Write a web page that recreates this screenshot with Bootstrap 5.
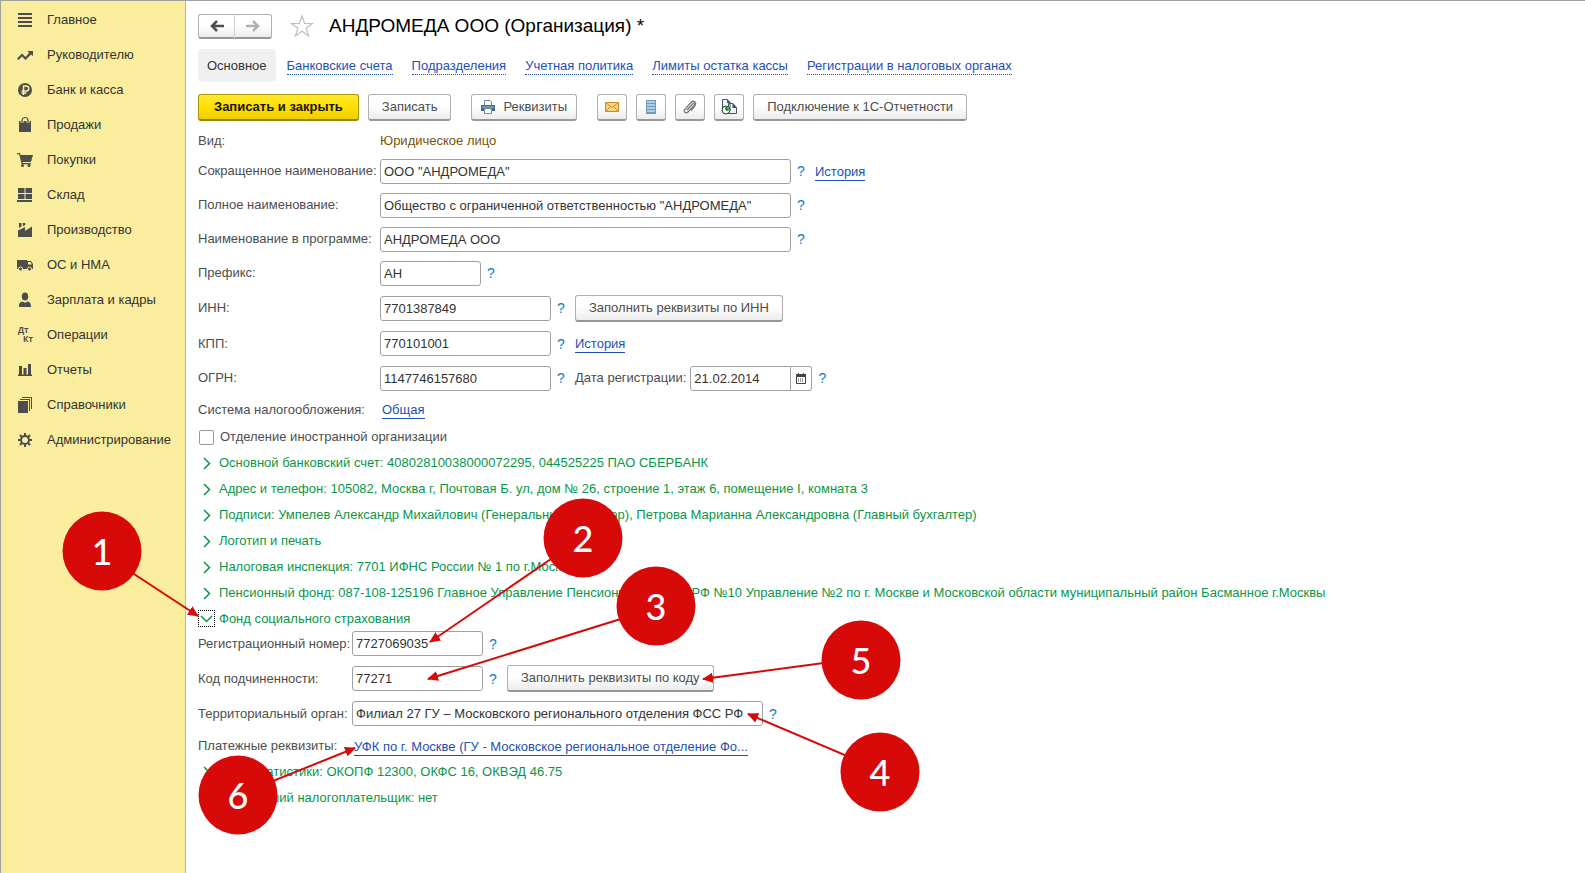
<!DOCTYPE html>
<html lang="ru">
<head>
<meta charset="utf-8">
<meta name="viewport" content="width=device-width, initial-scale=1">
<title>АНДРОМЕДА ООО (Организация)</title>
<link href="https://cdn.jsdelivr.net/npm/bootstrap@5.3.0/dist/css/bootstrap.min.css" rel="stylesheet">
<style>
  body { font: 13px/20px "Liberation Sans", Arial, sans-serif; color: #4d4d4d; background: #fff; }
  .app { border-top: 1px solid #a0a0a0; border-left: 1px solid #a0a0a0; }
  .sections { width: 185px; background: #fbed9e; border-right: 1px solid #c9ba7a; padding-top: 1px; }
  .sections .nav-link { height: 35px; padding: 0 0 0 16px; gap: 14px; color: #333; }
  .sections svg { width: 16px; height: 16px; fill: #4d4d4d; flex: none; overflow: visible; }
  .workspace { padding: 12px 12px 24px; min-width: 0; }
  .titlebar { height: 26px; }
  h1 { font-size: 19px; line-height: 26px; color: #000; margin: 0 0 0 15px; }
  .star { margin-left: 18px; padding: 0; border: 0; background: none; line-height: 0; }
  .tool { height: 27px; padding: 0 13px; color: #4d4d4d; background: linear-gradient(#fff 45%, #ececec); border: 1px solid #b0b0b0; border-bottom: 2px solid #979797; border-radius: 3px; font-size: 13px; line-height: 20px; white-space: nowrap; display: inline-flex; align-items: center; justify-content: center; }
  .tool-main { padding: 0 15px; background: linear-gradient(#ffe92f, #ffe000 50%, #f0cf00); border-color: #a89500; border-bottom-color: #978500; color: #1a1400; font-weight: 700; }
  .tool-print { padding: 0 9px; }
  .tool-icon { width: 30px; padding: 0; }
  .group-start { margin-left: 11px; }
  .arrows .tool { width: 37px; padding: 0; height: 25px; }
  .arrows .tool:first-child { border-radius: 3px 0 0 3px; border-right-color: #d0d0d0; }
  .arrows .tool:last-child { border-radius: 0 3px 3px 0; border-left: 0; }
  .pages { margin-top: 9px; gap: 19px; height: 34px; align-items: center; }
  .pages .nav-link { padding: 2px 0 0; line-height: 16px; color: #1d50b4; border-bottom: 1px dotted #1d50b4; }
  .pages .nav-link.active { color: #333; background: #f0f0f0; border: 0; border-radius: 4px; padding: 9px 9px 8px; margin-right: -8px; }
  .commands { margin-top: 12px; gap: 9px; }
  .form-main { margin-top: 7px; }
  .form-line { min-height: 34px; }
  .line-36 { min-height: 36px; }
  .line-35 { min-height: 35px; }
  .line-29 { min-height: 29px; }
  .line-26 { min-height: 26px; }
  .caption { width: 182px; flex: none; white-space: nowrap; }
  .caption + .lnk { margin-left: 2px; }
  .fund .caption { width: 154px; }
  .fund { gap: 10px; margin-bottom: 3px; }
  .fund-line { height: 25px; }
  .field { height: 25px; padding: 0 3px; border: 1px solid #a0a0a0; border-radius: 3px; color: #333; font-size: 13px; line-height: 20px; flex: none; background: #fff; }
  .w-long { width: 411px; } .w-mid { width: 171px; } .w-code { width: 131px; } .w-short { width: 101px; }
  .date { width: 101px; border-radius: 3px 0 0 3px; }
  .date-btn { width: 21px; height: 25px; padding: 0; border: 1px solid #a0a0a0; border-left: 0; border-radius: 0 3px 3px 0; background: #fff; line-height: 0; }
  .hint { width: 20px; margin-right: 4px; padding: 0; border: 0; background: none; color: #0c7cc4; flex: none; font-size: 14px; line-height: 20px; text-align: center; }
  .lnk { color: #1d50b4; line-height: 16px; padding-top: 2px; text-decoration: none; border-bottom: 1px solid #1d50b4; white-space: nowrap; }
  .kind { color: #7a5300; }
  .fold { height: 26px; border: 0; padding: 0; background: none; color: #0a9648; gap: 4px; text-align: left; white-space: nowrap; }
  .fold svg { width: 17px; height: 17px; fill: none; stroke: #0a9648; stroke-width: 1.5; flex: none; }
  .fold.open { height: 25px; }
  .fold.open svg { outline: 1px dotted #000; outline-offset: -1px; }
  .tick { width: 15px; height: 15px; margin: 0 6px 0 1px; border: 1px solid #999; }
  .tick.form-check-input { border-radius: 2px; }
  .callouts { left: 0; top: 0; width: 930px; height: 850px; pointer-events: none; }
  .callouts circle { fill: #d70909; }
  .callouts line { stroke: #d70909; stroke-width: 2; }
  .callouts text { fill: #fff; font: 500 36px Lato, "Open Sans", sans-serif; text-anchor: middle; }
</style>
</head>
<body>
<div class="app d-flex min-vh-100 position-relative">
  <nav class="sections nav flex-column flex-nowrap flex-shrink-0">
    <a class="nav-link d-flex align-items-center" href="#"><svg viewBox="0 0 16 16"><path d="M1 1h14v2H1zM1 5h14v2H1zM1 9h14v2H1zM1 13h14v2H1z"/></svg>Главное</a>
    <a class="nav-link d-flex align-items-center" href="#"><svg viewBox="0 0 16 16"><path d="M0 11.500 5 6.500 8.500 10 12 6 10.500 4H16v5l-2-1.500L8.500 13 5 9.500 1.500 13z"/></svg>Руководителю</a>
    <a class="nav-link d-flex align-items-center" href="#"><svg viewBox="0 0 16 16"><circle cx="8" cy="8" r="7"/><path d="M6.500 13V4h2.700a2.500 2.500 0 0 1 0 5H4.500M4.500 11h5" fill="none" stroke="#fbed9e" stroke-width="1.500"/></svg>Банк и касса</a>
    <a class="nav-link d-flex align-items-center" href="#"><svg viewBox="0 0 16 16"><path d="M2 4h12v11H2z"/><path d="M5 6V3.500a3 3 0 0 1 6 0V6" fill="none" stroke="#fbed9e" stroke-width="3"/><path d="M5 6V3.500a3 3 0 0 1 6 0V6" fill="none" stroke="#4d4d4d" stroke-width="1.200"/></svg>Продажи</a>
    <a class="nav-link d-flex align-items-center" href="#"><svg viewBox="0 0 16 16"><path d="M0 1h3l.6 2H16l-2 7H5.500l.3 1H14v1.200H4.700L2.200 2.200H0z"/><circle cx="5.500" cy="13.500" r="1.500"/><circle cx="12" cy="13.500" r="1.500"/></svg>Покупки</a>
    <a class="nav-link d-flex align-items-center" href="#"><svg viewBox="0 0 16 16"><path d="M1 1h6.500v5H1zM8.500 1H15v5H8.500zM1 7h6.500v5H1zM8.500 7H15v5H8.500zM0 13h15v2H0z"/></svg>Склад</a>
    <a class="nav-link d-flex align-items-center" href="#"><svg viewBox="0 0 16 16"><path d="M1 8.500 8 5v4l7-4.500V15H1zM2 1h2.500v3.500L2 6zM5.800 1H8.300v2L5.800 4.300z"/></svg>Производство</a>
    <a class="nav-link d-flex align-items-center" href="#"><svg viewBox="0 0 16 16"><path fill-rule="evenodd" d="M0 3h10v1h4l2 3v5H0zM11 5v2.500h4L13.500 5z"/><g stroke="#fbed9e"><circle cx="3.500" cy="12" r="2"/><circle cx="12.500" cy="12" r="2"/></g></svg>ОС и НМА</a>
    <a class="nav-link d-flex align-items-center" href="#"><svg viewBox="0 0 16 16"><ellipse cx="8" cy="4.500" rx="3.200" ry="4"/><path d="M2 15c0-4 1-5 3.500-5.500C7 11 9 11 10.500 9.500 13 10 14 11 14 15z"/></svg>Зарплата и кадры</a>
    <a class="nav-link d-flex align-items-center" href="#"><svg viewBox="0 0 16 16" font-family="Open Sans, sans-serif" font-weight="700" font-size="8"><text x="1" y="6">Дт</text><text x="6" y="15">Кт</text></svg>Операции</a>
    <a class="nav-link d-flex align-items-center" href="#"><svg viewBox="0 0 16 16"><path d="M2 4h3v8.500H2zM6.500 6h3v6.500h-3zM11 2h3v10.500h-3zM1 12.500h14V14H1z"/></svg>Отчеты</a>
    <a class="nav-link d-flex align-items-center" href="#"><svg viewBox="0 0 16 16"><path d="M1 4h10v12H1zM3 2h10v12h-1V3H3zM5 0h10v12h-1V1H5z"/></svg>Справочники</a>
    <a class="nav-link d-flex align-items-center" href="#"><svg viewBox="0 0 16 16"><g fill="none" stroke="#4d4d4d"><circle cx="8" cy="8" r="4" stroke-width="2"/><path stroke-width="2" d="M8 1v2.500M8 12.500V15M1 8h2.500M12.500 8H15M3 3l2 2M11 11l2 2M13 3l-2 2M5 11l-2 2"/></g></svg>Администрирование</a>
  </nav>

  <main class="workspace flex-grow-1">
    <header class="titlebar d-flex align-items-center">
      <div class="arrows d-flex">
        <button class="tool" type="button" aria-label="Назад"><svg width="14" height="12" viewBox="0 0 14 12"><path d="M14 6H3M7 1 2 6l5 5" fill="none" stroke="#4d4d4d" stroke-width="2.500"/></svg></button>
        <button class="tool" type="button" aria-label="Вперед"><svg width="14" height="12" viewBox="0 0 14 12"><path d="M0 6h11M7 1l5 5-5 5" fill="none" stroke="#b0b0b0" stroke-width="2.500"/></svg></button>
      </div>
      <button class="star" type="button" aria-label="В избранное"><svg width="24" height="24" viewBox="0 0 24 24"><path d="m12 2 2.600 7.500H22.500l-6.400 4.700 2.500 7.800-6.600-4.800L5.400 22l2.500-7.800L1.500 9.500h7.900z" fill="none" stroke="#b9bfc5" stroke-width="1.200"/></svg></button>
      <h1 class="fw-normal text-nowrap">АНДРОМЕДА ООО (Организация) *</h1>
    </header>

    <nav class="pages nav flex-nowrap text-nowrap">
      <a class="nav-link active" href="#">Основное</a>
      <a class="nav-link" href="#">Банковские счета</a>
      <a class="nav-link" href="#">Подразделения</a>
      <a class="nav-link" href="#">Учетная политика</a>
      <a class="nav-link" href="#">Лимиты остатка кассы</a>
      <a class="nav-link" href="#">Регистрации в налоговых органах</a>
    </nav>

    <div class="commands d-flex">
      <button class="tool tool-main" type="button">Записать и закрыть</button>
      <button class="tool" type="button">Записать</button>
      <button class="tool tool-print group-start" type="button"><svg class="me-2" width="14" height="14" viewBox="0 0 14 14"><path d="M3.500 5V.5H9L10.500 2v3" fill="#fff" stroke="#6b87a3"/><path d="M0 5h14v6H0z" fill="#41688f"/><path d="M1 7h12" stroke="#a9c0d6"/><path d="M3.500 8.500h7v5h-7z" fill="#fff" stroke="#6b87a3"/></svg>Реквизиты</button>
      <button class="tool tool-icon group-start" type="button" aria-label="Письмо"><svg width="14" height="10" viewBox="0 0 14 10"><path d="M.5.5h13v9H.5z" fill="#fbd77c" stroke="#c98a2b"/><path d="m1 1 6 4.500L13 1M1 9l4-4M13 9 9 5" fill="none" stroke="#c98a2b"/></svg></button>
      <button class="tool tool-icon" type="button" aria-label="Список"><svg width="10" height="14" viewBox="0 0 10 14"><path d="M0 0h10v14H0z" fill="#6d9ab8"/><path d="M1 2h8M1 5h8M1 8h8M1 11h8" stroke="#c5e0ee" stroke-width="1.500"/></svg></button>
      <button class="tool tool-icon" type="button" aria-label="Файлы"><svg width="14" height="14" viewBox="0 0 14 14"><path d="m4 10 5.500-6c1.200-1.300 2.700.1 1.600 1.400L5 12c-2 2-5 0-3.200-2.700L8 2.500c2.500-2.700 6 0 4 3L8 10.500" fill="none" stroke="#777" stroke-width="1.300"/></svg></button>
      <button class="tool tool-icon" type="button" aria-label="История документов"><svg width="16" height="16" viewBox="0 0 16 16"><path d="M1.500.5H6L9 3.500V12H1.500zM7.500 4.500H12l3.500 4v6h-8z" fill="#eef3f7" stroke="#44546a"/><path d="M6 0v4h4zM11.500 4v5H16z" fill="#44546a"/><circle cx="5" cy="11" r="4" fill="#eaffea" stroke="#333"/><path d="M5 11V7.500A3.500 3.500 0 0 1 8.500 11z" fill="#38c43c"/><path d="M5 8v3h2.500" stroke="#222" fill="none"/></svg></button>
      <button class="tool" type="button">Подключение к 1С-Отчетности</button>
    </div>

    <form class="form-main">
      <div class="form-line line-26 d-flex align-items-center"><span class="caption">Вид:</span><span class="kind">Юридическое лицо</span></div>
      <div class="form-line d-flex align-items-center"><label class="caption" for="f1">Сокращенное наименование:</label><input id="f1" class="field w-long" value='ООО "АНДРОМЕДА"'><button class="hint" type="button">?</button><a class="lnk" href="#">История</a></div>
      <div class="form-line d-flex align-items-center"><label class="caption" for="f2">Полное наименование:</label><input id="f2" class="field w-long" value='Общество с ограниченной ответственностью "АНДРОМЕДА"'><button class="hint" type="button">?</button></div>
      <div class="form-line d-flex align-items-center"><label class="caption" for="f3">Наименование в программе:</label><input id="f3" class="field w-long" value="АНДРОМЕДА ООО"><button class="hint" type="button">?</button></div>
      <div class="form-line d-flex align-items-center"><label class="caption" for="f4">Префикс:</label><input id="f4" class="field w-short" value="АН"><button class="hint" type="button">?</button></div>
      <div class="form-line line-36 d-flex align-items-center"><label class="caption" for="f5">ИНН:</label><input id="f5" class="field w-mid" value="7701387849"><button class="hint" type="button">?</button><button class="tool" type="button">Заполнить реквизиты по ИНН</button></div>
      <div class="form-line line-35 d-flex align-items-center"><label class="caption" for="f6">КПП:</label><input id="f6" class="field w-mid" value="770101001"><button class="hint" type="button">?</button><a class="lnk" href="#">История</a></div>
      <div class="form-line d-flex align-items-center"><label class="caption" for="f7">ОГРН:</label><input id="f7" class="field w-mid" value="1147746157680"><button class="hint" type="button">?</button><label class="me-1 text-nowrap" for="f8">Дата регистрации:</label><input id="f8" class="field date" value="21.02.2014"><button class="date-btn" type="button" aria-label="Календарь"><svg width="10" height="11" viewBox="0 0 10 11"><path d="M.5 2.500h9v8h-9z" fill="#fff" stroke="#444"/><path d="M0 1h10v3H0zM2 0h1v2H2zM7 0h1v2H7z" fill="#444"/><path d="M2 6h6M2 8h6" stroke="#444" stroke-dasharray="1 1"/></svg></button><button class="hint" type="button">?</button></div>
      <div class="form-line line-29 d-flex align-items-center"><span class="caption">Система налогообложения:</span><a class="lnk" href="#">Общая</a></div>
      <div class="form-line line-26 d-flex align-items-center"><input id="f9" class="form-check-input tick" type="checkbox"><label for="f9">Отделение иностранной организации</label></div>

      <div class="d-flex flex-column align-items-start">
        <button class="fold d-flex align-items-center" type="button"><svg viewBox="0 0 17 17"><path d="m6 3 5.500 5.500L6 14"/></svg>Основной банковский счет: 40802810038000072295, 044525225 ПАО СБЕРБАНК</button>
        <button class="fold d-flex align-items-center" type="button"><svg viewBox="0 0 17 17"><path d="m6 3 5.500 5.500L6 14"/></svg>Адрес и телефон: 105082, Москва г, Почтовая Б. ул, дом № 26, строение 1, этаж 6, помещение I, комната 3</button>
        <button class="fold d-flex align-items-center" type="button"><svg viewBox="0 0 17 17"><path d="m6 3 5.500 5.500L6 14"/></svg>Подписи: Умпелев Александр Михайлович (Генеральный директор), Петрова Марианна Александровна (Главный бухгалтер)</button>
        <button class="fold d-flex align-items-center" type="button"><svg viewBox="0 0 17 17"><path d="m6 3 5.500 5.500L6 14"/></svg>Логотип и печать</button>
        <button class="fold d-flex align-items-center" type="button"><svg viewBox="0 0 17 17"><path d="m6 3 5.500 5.500L6 14"/></svg>Налоговая инспекция: 7701 ИФНС России № 1 по г.Москве</button>
        <button class="fold d-flex align-items-center" type="button"><svg viewBox="0 0 17 17"><path d="m6 3 5.500 5.500L6 14"/></svg>Пенсионный фонд: 087-108-125196 Главное Управление Пенсионного фонда РФ №10 Управление №2 по г. Москве и Московской области муниципальный район Басманное г.Москвы</button>
        <button class="fold open d-flex align-items-center" type="button" aria-expanded="true"><svg viewBox="0 0 17 17"><path d="m3 6 5.500 5.500L14 6"/></svg>Фонд социального страхования</button>
      </div>

      <div class="fund d-flex flex-column">
        <div class="fund-line d-flex align-items-center"><label class="caption" for="s1">Регистрационный номер:</label><input id="s1" class="field w-code" value="7727069035"><button class="hint" type="button">?</button></div>
        <div class="fund-line d-flex align-items-center"><label class="caption" for="s2">Код подчиненности:</label><input id="s2" class="field w-code" value="77271"><button class="hint" type="button">?</button><button class="tool" type="button">Заполнить реквизиты по коду</button></div>
        <div class="fund-line d-flex align-items-center"><label class="caption" for="s3">Территориальный орган:</label><input id="s3" class="field w-long" value="Филиал 27 ГУ – Московского регионального отделения ФСС РФ"><button class="hint" type="button">?</button></div>
        <div class="d-flex align-items-center"><span class="caption">Платежные реквизиты:</span><a class="lnk" href="#">УФК по г. Москве (ГУ - Московское региональное отделение Фо...</a></div>
      </div>

      <div class="d-flex flex-column align-items-start">
        <button class="fold d-flex align-items-center" type="button"><svg viewBox="0 0 17 17"><path d="m6 3 5.500 5.500L6 14"/></svg>Коды статистики: ОКОПФ 12300, ОКФС 16, ОКВЭД 46.75</button>
        <button class="fold d-flex align-items-center" type="button"><svg viewBox="0 0 17 17"><path d="m6 3 5.500 5.500L6 14"/></svg>Крупнейший налогоплательщик: нет</button>
      </div>
    </form>
  </main>

  <!-- Numbered steps of the instruction, drawn over the form -->
  <svg class="callouts position-absolute" viewBox="1 1 930 850">
    <defs><marker id="tip" markerUnits="userSpaceOnUse" markerWidth="11" markerHeight="10" refX="10" refY="5" orient="auto"><path d="M0 0 11 5 0 10z" fill="#d70909"/></marker></defs>
    <g marker-end="url(#tip)">
      <line x1="102" y1="553" x2="198" y2="616"/>
      <line x1="583" y1="537" x2="430" y2="642"/>
      <line x1="656" y1="608" x2="428" y2="679"/>
      <line x1="880" y1="770" x2="748" y2="714"/>
      <line x1="861" y1="658" x2="703" y2="679"/>
      <line x1="238" y1="795" x2="355" y2="748"/>
    </g>
    <circle cx="102" cy="551" r="39.500"/><text x="102" y="565">1</text>
    <circle cx="583" cy="538" r="39.500"/><text x="583" y="552">2</text>
    <circle cx="656" cy="606" r="39.500"/><text x="656" y="620">3</text>
    <circle cx="880" cy="772" r="39.500"/><text x="880" y="786">4</text>
    <circle cx="861" cy="660" r="39.500"/><text x="861" y="674">5</text>
    <circle cx="238" cy="795" r="39.500"/><text x="238" y="809">6</text>
  </svg>
</div>
<script src="https://cdn.jsdelivr.net/npm/bootstrap@5.3.0/dist/js/bootstrap.bundle.min.js"></script>
</body>
</html>
